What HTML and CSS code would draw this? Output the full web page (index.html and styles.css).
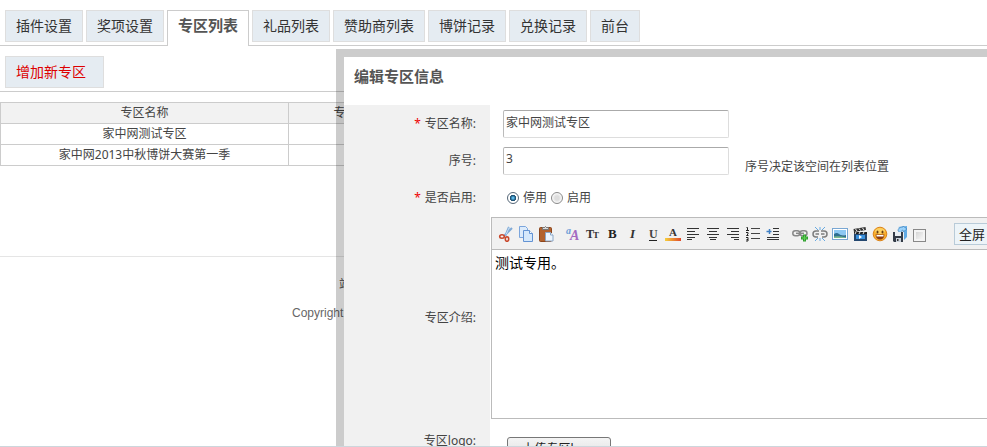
FILE: index.html
```html
<!DOCTYPE html>
<html lang="zh-CN">
<head>
    <meta charset="UTF-8">
    <meta name="viewport" content="width=device-width, initial-scale=1.0">
    <title>专区列表</title>
    <link rel="stylesheet" href="styles.css">
</head>
<body>
<div class="page">
    <nav class="tabs">
        <a class="tab" href="#">插件设置</a>
        <a class="tab" href="#">奖项设置</a>
        <a class="tab active" href="#">专区列表</a>
        <a class="tab" href="#">礼品列表</a>
        <a class="tab" href="#">赞助商列表</a>
        <a class="tab" href="#">博饼记录</a>
        <a class="tab" href="#">兑换记录</a>
        <a class="tab" href="#">前台</a>
    </nav>
    <div class="actions">
        <a class="tab add" href="#">增加新专区</a>
    </div>
    <table class="list">
        <colgroup><col class="col-name"><col class="col-second"><col></colgroup>
        <tr><th>专区名称</th><th>专区序号</th><th></th></tr>
        <tr><td>家中网测试专区</td><td></td><td></td></tr>
        <tr><td>家中网2013中秋博饼大赛第一季</td><td></td><td></td></tr>
    </table>
    <footer class="footer">
        <p class="site">站</p>
        <p class="copy">Copyright</p>
    </footer>

    <!-- 编辑弹窗 -->
    <div class="dialog">
        <h2 class="dialog-title">编辑专区信息</h2>
        <form class="form">
            <label class="label" for="name"><span class="star">*</span> 专区名称:</label>
            <div class="field"><input class="text" id="name" type="text" value="家中网测试专区"></div>

            <label class="label" for="order">序号:</label>
            <div class="field"><input class="text" id="order" type="text" value="3"><span class="tip">序号决定该空间在列表位置</span></div>

            <span class="label"><span class="star">*</span> 是否启用:</span>
            <div class="field radios">
                <input class="radio" type="radio" name="state" id="off" checked><label for="off">停用</label>
                <input class="radio" type="radio" name="state" id="on"><label for="on">启用</label>
            </div>

            <label class="label" for="intro">专区介绍:</label>
            <div class="editor">
                <div class="toolbar">
                    <button class="tool" type="button" title="剪切"><svg viewBox="0 0 16 16"><path d="M11 1L7.500 9.500M14 2L6 10" stroke="#7fa9d6" stroke-width="2" fill="none"/><path d="M11.500 1L8 8.500" stroke="#c8dff5"/><ellipse cx="4" cy="10.500" rx="2.300" ry="1.700" fill="none" stroke="#c9472b" stroke-width="1.600"/><ellipse cx="9" cy="13" rx="1.700" ry="2.300" fill="none" stroke="#c9472b" stroke-width="1.600"/></svg></button>
                    <button class="tool" type="button" title="复制"><svg viewBox="0 0 16 16"><path d="M1.500.5h6l2 2v9h-8z" fill="#dcebfb" stroke="#7ba5dc"/><path d="M5.500 4.500h6l3 3v8h-9z" fill="#d5e8fb" stroke="#6393d3"/><path d="M11.500 4.500v3h3" fill="#fff" stroke="#6393d3"/></svg></button>
                    <button class="tool" type="button" title="粘贴"><svg viewBox="0 0 16 16"><rect x="1.500" y="1.500" width="12" height="14" rx="1" fill="#b3622d" stroke="#8b451c"/><path d="M4.500 3.500v-2h2l1-1 1 1h2v2z" fill="#ddd" stroke="#777"/><path d="M7.500 6.500h5l2.500 2.500v6h-7.500z" fill="#edf5fd" stroke="#8aa6c6"/><path d="M12.500 6.500v2.500h2.500" fill="#fff" stroke="#8aa6c6"/></svg></button>
                    <span class="space"></span>
                    <button class="tool" type="button" title="字体"><svg viewBox="0 0 16 16"><text x="1" y="8" class="glyph-i" font-size="10" fill="#6f9fd8">a</text><text x="5" y="14" class="glyph-i" font-size="14" fill="#a46ac0">A</text></svg></button>
                    <button class="tool" type="button" title="字号"><svg viewBox="0 0 16 16"><text x="1" y="12" class="glyph" font-size="12" fill="#333">T</text><text x="8" y="12" class="glyph" font-size="9" fill="#333">T</text></svg></button>
                    <button class="tool" type="button" title="加粗"><svg viewBox="0 0 16 16"><text x="3" y="12" class="glyph" font-size="13" fill="#222">B</text></svg></button>
                    <button class="tool" type="button" title="斜体"><svg viewBox="0 0 16 16"><text x="5" y="12" class="glyph-i" font-size="13" fill="#333">I</text></svg></button>
                    <button class="tool" type="button" title="下划线"><svg viewBox="0 0 16 16"><text x="4" y="12" class="glyph" font-size="12" fill="#444">U</text><path d="M4 14.500h8" stroke="#222"/></svg></button>
                    <button class="tool" type="button" title="颜色"><svg viewBox="0 0 16 16"><defs><linearGradient id="bar"><stop offset="0" stop-color="#f6cf3b"/><stop offset="1" stop-color="#e0492b"/></linearGradient></defs><text x="4" y="10" class="glyph" font-size="11" fill="#333">A</text><path d="M0 12h16v3H0z" fill="url(#bar)"/></svg></button>
                    <button class="tool" type="button" title="左对齐"><svg viewBox="0 0 16 16"><path d="M2 2.500h12M2 5.500h8M2 8.500h12M2 11.500h8M2 13.500h5" stroke="#333"/></svg></button>
                    <button class="tool" type="button" title="居中"><svg viewBox="0 0 16 16"><path d="M2 2.500h12M4 5.500h8M2 8.500h12M4 11.500h8M5 13.500h6" stroke="#333"/></svg></button>
                    <button class="tool" type="button" title="右对齐"><svg viewBox="0 0 16 16"><path d="M2 2.500h12M6 5.500h8M2 8.500h12M6 11.500h8M9 13.500h5" stroke="#333"/></svg></button>
                    <button class="tool" type="button" title="编号"><svg viewBox="0 0 16 16"><path d="M6 2.500h9M6 7.500h9M6 12.500h9" stroke="#444"/><path d="M1.500 1.500h1v3M1 4.500h3M1 6.500h2v1.500l-1.500 1.500h2M1 11.500h2v3.500H1M1.500 13.500H3" stroke="#222" fill="none"/></svg></button>
                    <button class="tool" type="button" title="缩进"><svg viewBox="0 0 16 16"><path d="M8 2.500h6M8 5.500h6M8 8.500h6M2 11.500h12M2 13.500h12" stroke="#333"/><path d="M1.500 5.500h5M4.500 3v5" stroke="#3f7fc4" stroke-width="1.500"/></svg></button>
                    <span class="space"></span>
                    <button class="tool" type="button" title="链接"><svg viewBox="0 0 16 16"><g fill="none" stroke="#888" stroke-width="1.500"><rect x=".8" y="4.800" width="7" height="5" rx="2.500"/><rect x="8" y="4.800" width="7" height="5" rx="2.500"/><path d="M4 7.300h8"/></g><path d="M12.500 8.500v7M9 12h7" stroke="#2e9e2e" stroke-width="3"/><path d="M12.500 9.500v5M10 12h5" stroke="#62cf55"/></svg></button>
                    <button class="tool" type="button" title="取消链接"><svg viewBox="0 0 16 16"><path d="M7 5H4a3 3 0 0 0 0 6h2M3.500 8H7M9 5h3a3 3 0 0 1 0 6h-2M9 8h3.500" fill="none" stroke="#7d7d7d" stroke-width="1.500"/><path d="M3 1l3 3M8 1v3M13 1l-3 3M3 15l3-3M8 15v-3M13 15l-3-3" stroke="#68a9e0"/></svg></button>
                    <button class="tool" type="button" title="图片"><svg viewBox="0 0 16 16"><rect x=".5" y="2.500" width="15" height="11" fill="#fff" stroke="#79a7d3"/><path d="M2 4h12v5H2z" fill="#8cc8f3"/><path d="M2 8q3-2 5 0t7 1v3H2z" fill="#2d6e91"/><path d="M2 10.500q5-1 12 1v.5H2z" fill="#7bb98e"/></svg></button>
                    <button class="tool" type="button" title="视频"><svg viewBox="0 0 16 16"><path d="M1.500 3l12-2 .5 3-12 2z" fill="#333"/><path d="M3.500 3l1.500 2M7 2.500l1.500 2M10.500 2L12 4" stroke="#eee"/><path d="M2 6h13v9H2z" fill="#24476f"/><path d="M2 6h13v2H2z" fill="#222"/><path d="M4 6l-1 2M8 6L7 8M12 6l-1 2" stroke="#eee"/><path d="M4 9h9v4H4z" fill="#3a91dd"/><path d="M7 9l3 2-3 2z" fill="#fff"/></svg></button>
                    <button class="tool" type="button" title="表情"><svg viewBox="0 0 16 16"><circle cx="8" cy="8" r="6.800" fill="#f9ae2b" stroke="#dc841b"/><ellipse cx="8" cy="5" rx="5" ry="3" fill="#fcd060"/><ellipse cx="5.500" cy="6" rx="1" ry="1.500" fill="#693b11"/><ellipse cx="10.500" cy="6" rx="1" ry="1.500" fill="#693b11"/><path d="M3.500 8.500h9q-.5 5-4.500 5t-4.500-5z" fill="#8c3d13"/><path d="M4.500 9h7v1.500h-7z" fill="#fff"/></svg></button>
                    <button class="tool" type="button" title="远程图片"><svg viewBox="0 0 16 16"><path d="M6 1l9-1v11l-3 3V4z" fill="#62abe5"/><path d="M6 5q0-4 5-4V0l4 3-4 3V4q-2 0-2 3z" fill="#9bd2fa" stroke="#327bb8" stroke-width=".6"/><path d="M1 6h10v10H2l-1-1z" fill="#333b47"/><path d="M3 6h6v4H3z" fill="#e9eef3"/><path d="M4 12h5v4H4z" fill="#ccd4dd"/><path d="M5 13h1.500v2H5z" fill="#333"/></svg></button>
                    <input class="source" type="checkbox" aria-label="源代码">
                    <button class="full" type="button">全屏</button>
                </div>
                <textarea class="content" id="intro">测试专用。</textarea>
            </div>

            <label class="label last" for="logo">专区logo:</label>
            <div class="field last"><button class="upload" id="logo" type="button">上传专区logo</button></div>
        </form>
    </div>
</div>
</body>
</html>
```
FILE: styles.css
```css
* {
    box-sizing: border-box;
}
body {
    margin: 0;
    font: 12px/20px "Noto Sans", "Noto Sans CJK SC", sans-serif;
    color: #444;
    background: #fff;
}
.page {
    position: relative;
    height: 100vh;
    overflow: hidden;
    border-bottom: 1px solid #cdd6dc;
}

.tabs {
    display: flex;
    align-items: flex-start;
    gap: 3px;
    height: 46px;
    padding: 10px 5px 0;
    border-bottom: 1px solid #ccc;
}
.tab {
    height: 32px;
    padding: 0 10px;
    border: 1px solid #dedede;
    background: #e5ecf2;
    color: #333;
    font-size: 14px;
    line-height: 29px;
    text-decoration: none;
    white-space: nowrap;
}
.tab.active {
    height: 36px;
    border-color: #ccc;
    border-bottom: 0;
    background: #fff;
    color: #555;
    font-size: 15px;
    font-weight: bold;
}
.actions {
    display: flex;
    padding: 10px 5px 3px;
    border-bottom: 1px solid #ccc;
}
.add {
    padding-right: 17px;
    color: #d00;
}

.list {
    width: 100%;
    margin-top: 10px;
    border-collapse: collapse;
    table-layout: fixed;
}
.col-name {
    width: 288px;
}
.col-second {
    width: 138px;
}
.list th,
.list td {
    height: 21px;
    padding: 0;
    border: 1px solid #ccc;
    font-weight: normal;
    text-align: center;
}
.list th {
    background: #f2f2f2;
}

.footer {
    margin-top: 90px;
    padding: 18px 0 0 292px;
    border-top: 1px solid #e5e5e5;
}
.footer p {
    margin: 0 0 8px;
}
.footer .site {
    padding-left: 47px;
}
.copy {
    color: #666;
    font-family: "Liberation Sans", Arial, sans-serif;
}

.dialog {
    position: absolute;
    top: 49px;
    left: 336px;
    right: -20px;
    border: 8px solid rgba(0, 0, 0, .2);
    background: #fff;
    background-clip: padding-box;
}
.dialog-title {
    margin: 0;
    padding-left: 10px;
    color: #555;
    font-size: 15px;
    line-height: 38px;
    height: 48px;
}
.form {
    display: grid;
    grid-template-columns: 146px 1fr;
    grid-template-rows: 37px 37px 38px 202px 60px;
}
.label {
    display: flex;
    align-items: center;
    justify-content: flex-end;
    gap: 4px;
    padding-right: 14px;
    background: #f1f1f1;
}
.star {
    color: #e00;
}
.field {
    display: flex;
    align-items: center;
    padding-left: 13px;
}
.text {
    width: 226px;
    height: 28px;
    padding: 0 2px 4px;
    border: 1px solid #ddd;
    border-top-color: #aaa;
    border-left-color: #bbb;
    border-radius: 2px;
    background: #fff;
    color: #444;
    font: inherit;
}
.tip {
    padding: 12px 0 0 16px;
}
.radios {
    gap: 4px;
    padding-left: 17px;
}
.radio {
    appearance: none;
    width: 12px;
    height: 12px;
    margin: 0;
    border: 1px solid #888;
    border-radius: 50%;
    background: radial-gradient(#ddd 30%, #fff 75%);
}
.radio:checked {
    border-color: #567;
    background: radial-gradient(#5bb8e8 10%, #124467 40%, #fff 50%);
}

.editor {
    display: flex;
    flex-direction: column;
    margin-left: 1px;
    border: 1px solid #bbb;
}
.toolbar {
    display: flex;
    align-items: center;
    height: 32px;
    padding-left: 4px;
    border-bottom: 1px solid #bbb;
    background: #f1f1f1;
}
.tool {
    flex: none;
    width: 20px;
    height: 20px;
    padding: 2px;
    border: 0;
    background: none;
}
.tool svg {
    display: block;
    width: 16px;
    height: 16px;
}
.glyph {
    font-family: "Liberation Serif", serif;
    font-weight: bold;
}
.glyph-i {
    font-family: "Liberation Serif", serif;
    font-weight: bold;
    font-style: italic;
}
.space {
    flex: none;
    width: 7px;
}
.source {
    appearance: none;
    flex: none;
    width: 13px;
    height: 13px;
    margin: 3px 28px 0 3px;
    border: 1px solid #888;
    background: linear-gradient(135deg, #ccc, #fff);
    box-shadow: inset 0 0 0 2px #f4f4f4;
}
.full {
    height: 22px;
    padding: 0 4px;
    border: 1px solid #b9cbd8;
    background: #edf4f8;
    color: #222;
    font: 13px/18px "Noto Sans CJK SC", sans-serif;
    white-space: nowrap;
}
.content {
    flex: 1;
    padding: 2px 3px;
    border: 0;
    outline: 0;
    resize: none;
    color: #000;
    font: 14px/20px "Noto Sans CJK SC", sans-serif;
}
.last {
    align-items: flex-start;
    padding-top: 12px;
}
.field.last {
    padding: 18px 0 0 17px;
}
.upload {
    width: 104px;
    height: 24px;
    padding: 0;
    border: 1px solid #777;
    border-radius: 3px;
    background: linear-gradient(#f4f4f4, #ddd);
    color: #222;
    font: inherit;
}
```
